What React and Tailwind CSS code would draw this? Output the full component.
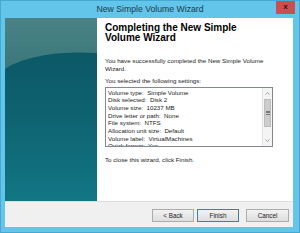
import React from "react";

const settings = [
  "Volume type:  Simple Volume",
  "Disk selected:  Disk 2",
  "Volume size:  10237 MB",
  "Drive letter or path:  None",
  "File system:  NTFS",
  "Allocation unit size:  Default",
  "Volume label:  VirtualMachines",
  "Quick format:  Yes",
];

// teal side picture of the wizard
const SideArt = () => (
  <svg width="92" height="183" viewBox="0 0 92 183" className="block">
    <defs>
      <linearGradient id="base" x1="0" y1="0" x2="0" y2="1">
        <stop offset="0" stopColor="#0b5363" />
        <stop offset="0.5" stopColor="#0e616f" />
        <stop offset="1" stopColor="#127684" />
      </linearGradient>
      <linearGradient id="gloss" x1="0" y1="0" x2="0" y2="1">
        <stop offset="0" stopColor="#4a8285" />
        <stop offset="1" stopColor="#3a777b" />
      </linearGradient>
    </defs>
    <rect width="92" height="183" fill="url(#base)" />
    <path d="M0 0H92V35C62 33 22 36 0 51Z" fill="url(#gloss)" />
  </svg>
);

const Btn = ({ children, primary, className = "" }) => (
  <button
    className={`h-[13px] flex items-center justify-center text-[6.3px] text-[#222] bg-gradient-to-b from-[#f2f2f2] to-[#dedede] border ${
      primary ? "border-[#3c7fb1]" : "border-[#acacac]"
    } ${className}`}
  >
    {children}
  </button>
);

export default function App() {
  return (
    <div
      className="w-[300px] h-[233px] bg-[#62c5e9] border border-[#45a9d1] flex flex-col overflow-hidden"
      style={{ fontFamily: '"Liberation Sans", Arial, sans-serif' }}
    >
      {/* title bar */}
      <div className="h-[17px] relative flex items-center justify-center shrink-0">
        <span className="text-[8.7px] text-[#1d3a50] leading-none">New Simple Volume Wizard</span>
        <div className="absolute right-[4px] top-[-1px] w-[19px] h-[14px] bg-[#c75050] flex items-center justify-center">
          <span className="text-[8px] font-bold text-[#3a1010] leading-none">x</span>
        </div>
      </div>

      <div className="ml-[4px] mr-[6px] flex flex-col bg-white">
        <div className="flex h-[183px]">
          <SideArt />
          <div className="flex-1 pl-[8px] pt-[5px] text-[6.2px] leading-[7.5px] text-[#222]">
            <div className="text-[10px] leading-[10px] font-bold text-black">
              Completing the New Simple
              <br />
              Volume Wizard
            </div>
            <p className="mt-[14px]">
              You have successfully completed the New Simple Volume
              <br />
              Wizard.
            </p>
            <p className="mt-[5px]">You selected the following settings:</p>
            <div className="mt-[2px] w-[168px] h-[60px] border border-[#828790] flex overflow-hidden">
              <div className="flex-1 pl-[2px] pt-[1px] leading-[7.7px] overflow-hidden">
                {settings.map((s) => (
                  <div key={s} className="whitespace-pre">
                    {s}
                  </div>
                ))}
              </div>
              <div className="w-[10px] bg-[#f4f4f4] border-l border-[#e3e3e3] flex flex-col">
                <div className="h-[11px] flex items-center justify-center text-[#8a8a8a]">
                  <svg width="5" height="3" viewBox="0 0 5 3">
                    <path d="M0.5 2.5L2.5 0.5L4.5 2.5" stroke="#8a8a8a" strokeWidth="0.8" fill="none" />
                  </svg>
                </div>
                <div className="h-[28px] mx-[1px] bg-[#cdcdcd] border border-[#bcbcbc] flex flex-col items-center justify-center gap-[1px]">
                  <div className="w-[4px] h-[0.6px] bg-[#777]" />
                  <div className="w-[4px] h-[0.6px] bg-[#777]" />
                  <div className="w-[4px] h-[0.6px] bg-[#777]" />
                </div>
                <div className="flex-1" />
                <div className="h-[10px] flex items-center justify-center">
                  <svg width="5" height="3" viewBox="0 0 5 3">
                    <path d="M0.5 0.5L2.5 2.5L4.5 0.5" stroke="#8a8a8a" strokeWidth="0.8" fill="none" />
                  </svg>
                </div>
              </div>
            </div>
            <p className="mt-[9px]">To close this wizard, click Finish.</p>
          </div>
        </div>

        {/* button bar */}
        <div className="h-[26px] bg-[#f0f0f0] border-t border-[#dfdfdf] flex justify-end items-start pt-[7px] pr-[4px]">
          <Btn className="w-[42px]">&lt; Back</Btn>
          <Btn primary className="w-[42px] ml-[3px]">
            Finish
          </Btn>
          <Btn className="w-[43px] ml-[7px]">Cancel</Btn>
        </div>
      </div>
    </div>
  );
}
